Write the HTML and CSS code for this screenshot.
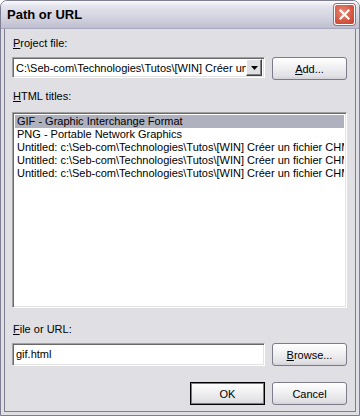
FILE: index.html
```html
<!DOCTYPE html>
<html lang="fr">
<head>
    <meta charset="UTF-8">
    <meta name="viewport" content="width=device-width, initial-scale=1.0">
    <title>Path or URL</title>
    <link rel="stylesheet" href="styles.css">
</head>
<body>
    <div class="window">
        <header class="titlebar">
            <span class="title">Path or URL</span>
            <button class="close" aria-label="Close">
                <svg width="11" height="11" viewBox="0 0 11 11">
                    <path d="M1.5 1.5 L9.5 9.5 M9.5 1.5 L1.5 9.5" stroke="#fff" stroke-width="2.2" stroke-linecap="square"/>
                </svg>
            </button>
        </header>
        <main class="frame">
            <label class="label"><span class="key">P</span>roject file:</label>
            <div class="row">
                <div class="combo">
                    <span class="combo-text">C:\Seb-com\Technologies\Tutos\[WIN] Créer un fichier CHM</span>
                    <span class="combo-arrow">
                        <svg width="7" height="4" viewBox="0 0 7 4"><path d="M0 0 H7 L3.5 4 Z" fill="#000"/></svg>
                    </span>
                </div>
                <button class="btn"><span class="key">A</span>dd...</button>
            </div>

            <label class="label label-titles"><span class="key">H</span>TML titles:</label>
            <ul class="list">
                <li class="selected">GIF - Graphic Interchange Format</li>
                <li>PNG - Portable Network Graphics</li>
                <li>Untitled: c:\Seb-com\Technologies\Tutos\[WIN] Créer un fichier CHM\index.html</li>
                <li>Untitled: c:\Seb-com\Technologies\Tutos\[WIN] Créer un fichier CHM\png.html</li>
                <li>Untitled: c:\Seb-com\Technologies\Tutos\[WIN] Créer un fichier CHM\jpg.html</li>
            </ul>

            <label class="label label-file"><span class="key">F</span>ile or URL:</label>
            <div class="row">
                <div class="edit">gif.html</div>
                <button class="btn"><span class="key">B</span>rowse...</button>
            </div>

            <div class="row actions">
                <button class="btn btn-default">OK</button>
                <button class="btn">Cancel</button>
            </div>
        </main>
    </div>
</body>
</html>
```

FILE: styles.css
```css
html {
    box-sizing: border-box;
    font-family: 'Liberation Sans', Arial, sans-serif;
    font-size: 11px;
}

*, *::after, *::before {
    box-sizing: inherit;
}

body {
    margin: 0;
    width: 360px;
    height: 416px;
    background: #fff;
}

.window {
    width: 360px;
    height: 416px;
    display: flex;
    flex-direction: column;
    border: 1px solid #7e7e92;
    border-radius: 7px 7px 0 0;
    background: #e0dfe3;
    overflow: hidden;
}

.titlebar {
    height: 28px;
    flex: none;
    display: flex;
    align-items: center;
    justify-content: space-between;
    padding: 0 4px 1px 6px;
    background: linear-gradient(#fdfdff 0%, #e4e4ee 18%, #d6d6e2 55%, #bebed0 100%);
    border-bottom: 1px solid #a8a8bc;
}

.title {
    font-weight: bold;
    font-size: 13px;
    color: #000;
}

.close {
    width: 21px;
    height: 21px;
    padding: 0;
    display: flex;
    align-items: center;
    justify-content: center;
    border: 1px solid #fff;
    border-radius: 3px;
    background: radial-gradient(circle at 40% 35%, #e88a78 0%, #d65a44 55%, #c2402c 100%);
    box-shadow: 0 0 0 1px #b06a62;
}

.frame {
    flex: 1;
    display: flex;
    flex-direction: column;
    padding: 8px 9px 0 8px;
    border-left: 3px solid #e0dfe3;
    border-right: 3px solid #e0dfe3;
    border-bottom: 3px solid #e0dfe3;
    box-shadow: inset 1px 0 0 #7e7e92, inset -1px 0 0 #7e7e92, inset 0 -1px 0 #7e7e92;
}

.key {
    text-decoration: underline;
}

.label {
    display: block;
    line-height: 13px;
    color: #000;
    padding-left: 1px;
}

.label-titles {
    margin-top: 10px;
}

.label-file {
    margin-top: 15px;
}

.row {
    display: flex;
    gap: 7px;
    margin-top: 7px;
    align-items: flex-start;
}

.combo, .edit {
    width: 253px;
    background: #fff;
    border: 1px solid;
    border-color: #a0a0a0 #fff #fff #a0a0a0;
    box-shadow: inset 1px 1px 0 #696969, inset -1px -1px 0 #e3e3e3;
}

.combo {
    height: 21px;
    display: flex;
    align-items: center;
    padding: 0 2px 0 3px;
}

.combo-text {
    flex: 1;
    white-space: nowrap;
    overflow: hidden;
}

.combo-arrow {
    width: 16px;
    height: 17px;
    flex: none;
    display: flex;
    align-items: center;
    justify-content: center;
    background: #e0dfe3;
    border: 1px solid;
    border-color: #fff #404040 #404040 #fff;
    box-shadow: inset -1px -1px 0 #808080;
}

.edit {
    height: 23px;
    line-height: 21px;
    padding: 0 3px;
}

.btn {
    width: 75px;
    height: 23px;
    padding: 0;
    font-family: inherit;
    font-size: 11px;
    color: #000;
    border: 1px solid #7b7b8a;
    border-radius: 3px;
    background: linear-gradient(#ffffff 0%, #f2f2f4 40%, #e2e2e6 85%, #d2d2d8 100%);
}

.btn-default {
    border: 1px solid #000;
    border-radius: 0;
    box-shadow: inset 0 0 0 1px #7b7b8a;
}

.list {
    list-style: none;
    margin: 9px 0 0;
    padding: 2px;
    width: 335px;
    height: 196px;
    background: #fff;
    border: 1px solid;
    border-color: #a0a0a0 #fff #fff #a0a0a0;
    box-shadow: inset 1px 1px 0 #696969, inset -1px -1px 0 #e3e3e3;
    overflow: hidden;
}

.list li {
    height: 13px;
    line-height: 13px;
    padding-left: 2px;
    white-space: nowrap;
    overflow: hidden;
}

.list .selected {
    background: #b0b1bf;
}

.actions {
    justify-content: flex-end;
    margin-top: 16px;
}
```
